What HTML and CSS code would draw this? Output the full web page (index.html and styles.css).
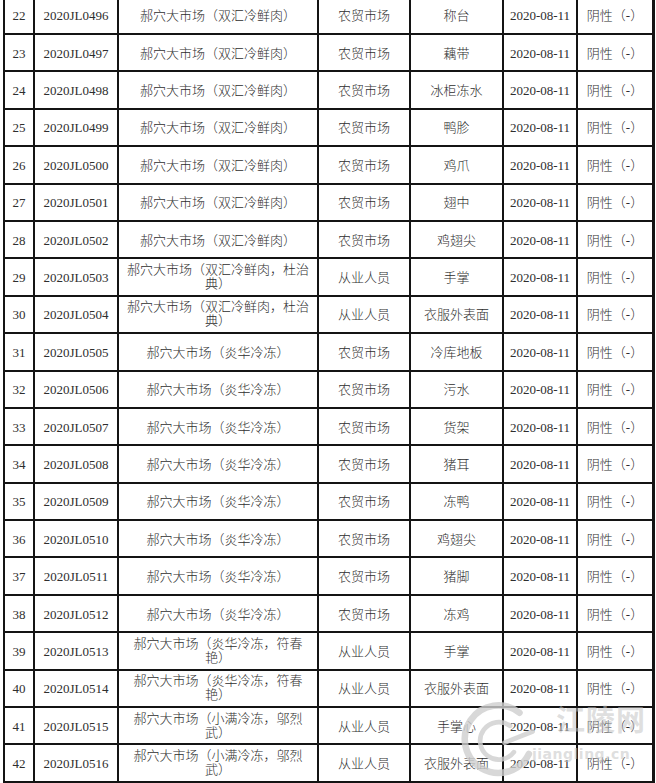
FILE: index.html
```html
<!DOCTYPE html>
<html lang="zh-CN">
<head>
<meta charset="utf-8">
<title>检测结果</title>
<link rel="stylesheet" href="styles.css">
</head>
<body>
<div class="page">
  <div class="grid">
    <div class="c">22</div><div class="c">2020JL0496</div><div class="c">郝穴大市场（双汇冷鲜肉）</div><div class="c">农贸市场</div><div class="c">称台</div><div class="c">2020-08-11</div><div class="c">阴性（-）</div>
    <div class="c">23</div><div class="c">2020JL0497</div><div class="c">郝穴大市场（双汇冷鲜肉）</div><div class="c">农贸市场</div><div class="c">藕带</div><div class="c">2020-08-11</div><div class="c">阴性（-）</div>
    <div class="c">24</div><div class="c">2020JL0498</div><div class="c">郝穴大市场（双汇冷鲜肉）</div><div class="c">农贸市场</div><div class="c">冰柜冻水</div><div class="c">2020-08-11</div><div class="c">阴性（-）</div>
    <div class="c">25</div><div class="c">2020JL0499</div><div class="c">郝穴大市场（双汇冷鲜肉）</div><div class="c">农贸市场</div><div class="c">鸭胗</div><div class="c">2020-08-11</div><div class="c">阴性（-）</div>
    <div class="c">26</div><div class="c">2020JL0500</div><div class="c">郝穴大市场（双汇冷鲜肉）</div><div class="c">农贸市场</div><div class="c">鸡爪</div><div class="c">2020-08-11</div><div class="c">阴性（-）</div>
    <div class="c">27</div><div class="c">2020JL0501</div><div class="c">郝穴大市场（双汇冷鲜肉）</div><div class="c">农贸市场</div><div class="c">翅中</div><div class="c">2020-08-11</div><div class="c">阴性（-）</div>
    <div class="c">28</div><div class="c">2020JL0502</div><div class="c">郝穴大市场（双汇冷鲜肉）</div><div class="c">农贸市场</div><div class="c">鸡翅尖</div><div class="c">2020-08-11</div><div class="c">阴性（-）</div>
    <div class="c">29</div><div class="c">2020JL0503</div><div class="c two">郝穴大市场（双汇冷鲜肉，杜治<br>典）</div><div class="c">从业人员</div><div class="c">手掌</div><div class="c">2020-08-11</div><div class="c">阴性（-）</div>
    <div class="c">30</div><div class="c">2020JL0504</div><div class="c two">郝穴大市场（双汇冷鲜肉，杜治<br>典）</div><div class="c">从业人员</div><div class="c">衣服外表面</div><div class="c">2020-08-11</div><div class="c">阴性（-）</div>
    <div class="c">31</div><div class="c">2020JL0505</div><div class="c">郝穴大市场（炎华冷冻）</div><div class="c">农贸市场</div><div class="c">冷库地板</div><div class="c">2020-08-11</div><div class="c">阴性（-）</div>
    <div class="c">32</div><div class="c">2020JL0506</div><div class="c">郝穴大市场（炎华冷冻）</div><div class="c">农贸市场</div><div class="c">污水</div><div class="c">2020-08-11</div><div class="c">阴性（-）</div>
    <div class="c">33</div><div class="c">2020JL0507</div><div class="c">郝穴大市场（炎华冷冻）</div><div class="c">农贸市场</div><div class="c">货架</div><div class="c">2020-08-11</div><div class="c">阴性（-）</div>
    <div class="c">34</div><div class="c">2020JL0508</div><div class="c">郝穴大市场（炎华冷冻）</div><div class="c">农贸市场</div><div class="c">猪耳</div><div class="c">2020-08-11</div><div class="c">阴性（-）</div>
    <div class="c">35</div><div class="c">2020JL0509</div><div class="c">郝穴大市场（炎华冷冻）</div><div class="c">农贸市场</div><div class="c">冻鸭</div><div class="c">2020-08-11</div><div class="c">阴性（-）</div>
    <div class="c">36</div><div class="c">2020JL0510</div><div class="c">郝穴大市场（炎华冷冻）</div><div class="c">农贸市场</div><div class="c">鸡翅尖</div><div class="c">2020-08-11</div><div class="c">阴性（-）</div>
    <div class="c">37</div><div class="c">2020JL0511</div><div class="c">郝穴大市场（炎华冷冻）</div><div class="c">农贸市场</div><div class="c">猪脚</div><div class="c">2020-08-11</div><div class="c">阴性（-）</div>
    <div class="c">38</div><div class="c">2020JL0512</div><div class="c">郝穴大市场（炎华冷冻）</div><div class="c">农贸市场</div><div class="c">冻鸡</div><div class="c">2020-08-11</div><div class="c">阴性（-）</div>
    <div class="c">39</div><div class="c">2020JL0513</div><div class="c two">郝穴大市场（炎华冷冻，符春<br>艳）</div><div class="c">从业人员</div><div class="c">手掌</div><div class="c">2020-08-11</div><div class="c">阴性（-）</div>
    <div class="c">40</div><div class="c">2020JL0514</div><div class="c two">郝穴大市场（炎华冷冻，符春<br>艳）</div><div class="c">从业人员</div><div class="c">衣服外表面</div><div class="c">2020-08-11</div><div class="c">阴性（-）</div>
    <div class="c">41</div><div class="c">2020JL0515</div><div class="c two">郝穴大市场（小满冷冻，邬烈<br>武）</div><div class="c">从业人员</div><div class="c">手掌心</div><div class="c">2020-08-11</div><div class="c">阴性（-）</div>
    <div class="c">42</div><div class="c">2020JL0516</div><div class="c two">郝穴大市场（小满冷冻，邬烈<br>武）</div><div class="c">从业人员</div><div class="c">衣服外表面</div><div class="c">2020-08-11</div><div class="c">阴性（-）</div>
  </div>
  <svg class="wm-logo" width="90" height="90" viewBox="0 0 96 96">
    <path d="M72 20 A36 36 0 1 0 82 64" fill="none" stroke="#cfcfcf" stroke-width="7" stroke-linecap="round"/>
    <path d="M62 34 A20 20 0 1 0 66 62" fill="none" stroke="#cfcfcf" stroke-width="5" stroke-linecap="round"/>
    <path d="M56 52 L86 40" fill="none" stroke="#cfcfcf" stroke-width="5" stroke-linecap="round"/>
  </svg>
  <div class="wm-cn">江陵网</div>
  <div class="wm-en">jiangling.cn</div>
</div>
</body>
</html>
```

FILE: styles.css
```css
html, body {
  margin: 0;
  padding: 0;
  background: #ffffff;
}
.page {
  position: relative;
  width: 656px;
  height: 783px;
  overflow: hidden;
}
.grid {
  display: grid;
  grid-template-columns: 28px 82px 198px 90px 91px 72px 74px;
  grid-auto-rows: 35.4px;
  gap: 2px;
  background: #141414;
  border-left: 2px solid #141414;
  border-right: 3px solid #141414;
  border-top: 2px solid #141414;
  border-bottom: 3px solid #141414;
  margin-left: 3px;
  margin-top: -4.4px;
  width: 647px;
}
.c {
  background: #ffffff;
  display: flex;
  align-items: center;
  justify-content: center;
  text-align: center;
  font-family: "Liberation Serif", "Noto Sans CJK SC", serif;
  font-size: 13px;
  font-weight: 300;
  color: #2e2e2e;
  white-space: nowrap;
  line-height: 14px;
  padding-top: 2px;
}
.c.two {
  line-height: 14px;
  padding-top: 0;
}
.wm-logo {
  position: absolute;
  left: 452px;
  top: 694px;
  opacity: 0.8;
}
.wm-cn {
  position: absolute;
  left: 556px;
  top: 700px;
  font-family: "Noto Sans CJK SC", sans-serif;
  font-weight: 700;
  font-size: 29px;
  line-height: 36px;
  color: rgba(195, 195, 195, 0.55);
  letter-spacing: 1px;
}
.wm-en {
  position: absolute;
  left: 532px;
  top: 744px;
  font-family: "DejaVu Sans", sans-serif;
  font-weight: 700;
  font-size: 14px;
  line-height: 20px;
  letter-spacing: 0.5px;
  color: rgba(195, 195, 195, 0.55);
}
```
